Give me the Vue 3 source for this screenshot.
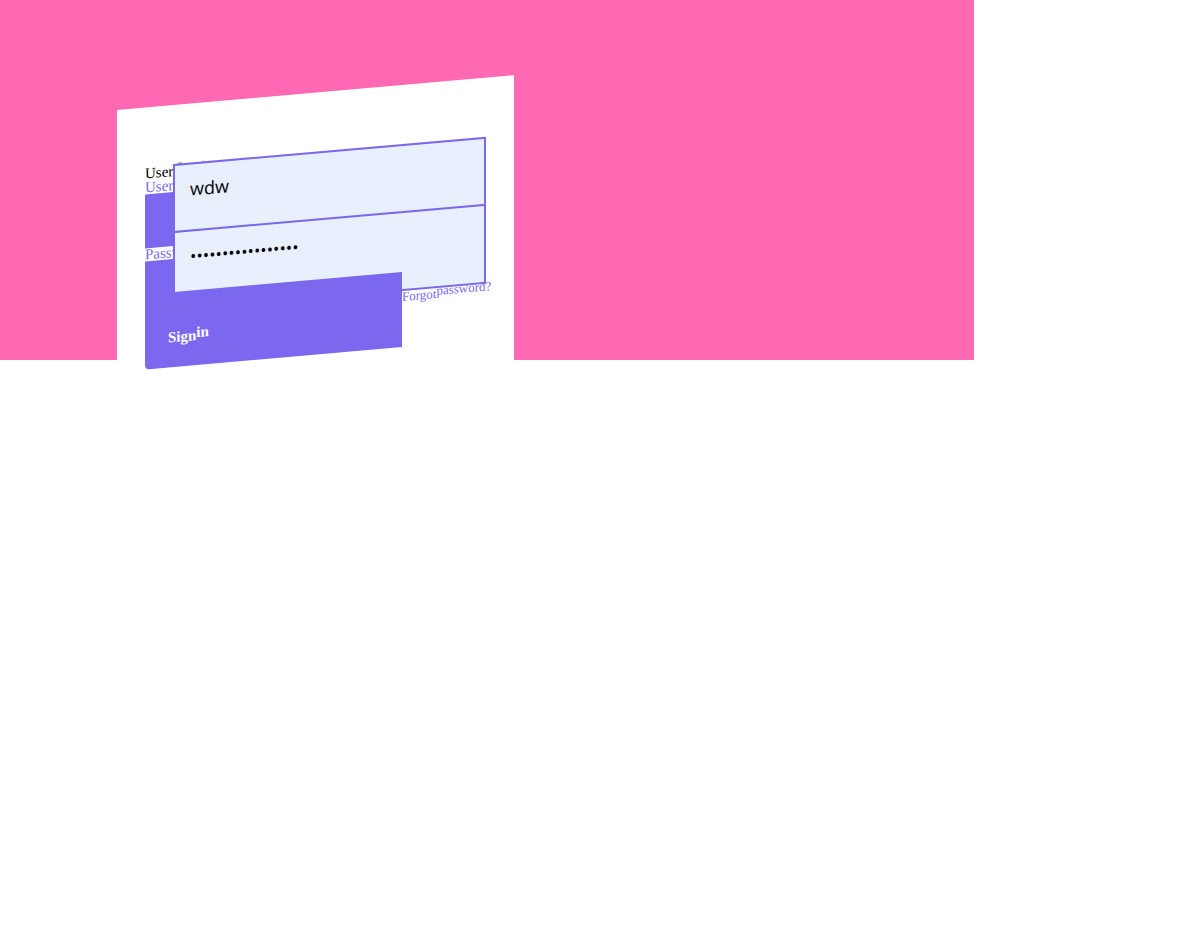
<template>
  <div class="page">
    <main class="hero">
      <form class="card" @submit.prevent>
        <p class="caption"><span>User</span> <span class="raised">Login</span></p>

        <div class="field">
          <label for="username">Username</label>
          <span class="block"></span>
          <input id="username" v-model="username" type="text" autocomplete="username">
        </div>

        <div class="field">
          <label for="password">Password</label>
          <span class="block"></span>
          <input id="password" v-model="password" type="password" autocomplete="current-password">
        </div>

        <div class="actions">
          <button type="submit"><span>Sign</span><span class="raised">in</span></button>
          <a href="#forgot"><span>Forgot</span><span class="raised">password?</span></a>
        </div>
      </form>
    </main>
  </div>
</template>

<script setup>
import { ref } from 'vue'

const username = ref('wdw')
const password = ref('wdwpasswordsecret')
</script>

<style>
body {
  margin: 0;
  background: #fff;
}
</style>

<style scoped>
.page {
  min-height: 100vh;
}

.hero {
  box-sizing: border-box;
  width: 81.2%;
  height: 360px;
  padding: 110px 28px 0 117px;
  background: hotpink;
  font-family: "Liberation Serif", "Times New Roman", serif;
  font-size: 15px;
}

.card {
  box-sizing: border-box;
  max-width: 397px;
  padding: 59px 28px 28px;
  background: #fff;
  transform: skewY(-5deg);
  transform-origin: 0 0;
}

.caption {
  height: 14px;
  margin: 0;
  line-height: 14px;
  color: #000;
}

.caption .raised {
  line-height: 0;
}

.field {
  position: relative;
  height: 67px;
}

.field label {
  display: block;
  line-height: 14px;
  color: mediumslateblue;
}

.block {
  display: block;
  width: 28px;
  height: 54px;
  background: mediumslateblue;
}

/* the inputs slide over the labels and the coloured blocks */
.field input {
  position: absolute;
  top: -14px;
  left: 28px;
  box-sizing: border-box;
  width: 313px;
  height: 80px;
  padding: 0 15px 28px;
  border: 2px solid mediumslateblue;
  border-radius: 0;
  outline: 0;
  background: #e8f0fe;
  color: #000;
  font-family: "Open Sans", "Noto Sans", sans-serif;
  font-size: 17px;
}

.field input[type="text"] {
  font-size: 18px;
}

.actions {
  position: relative;
  display: flex;
  align-items: flex-start;
  margin-top: -20px;
}

.actions button {
  flex: none;
  width: 257px;
  height: 75px;
  padding: 12px 23px 0;
  border: 0;
  border-radius: 4px 0 0 4px;
  background: mediumslateblue;
  color: #fff;
  font-family: inherit;
  font-size: 15px;
  font-weight: bold;
  text-align: left;
}

.actions a {
  padding-top: 14px;
  color: mediumslateblue;
  font-size: 13px;
  text-decoration: none;
  white-space: nowrap;
}

.raised {
  vertical-align: 3px;
}
</style>
